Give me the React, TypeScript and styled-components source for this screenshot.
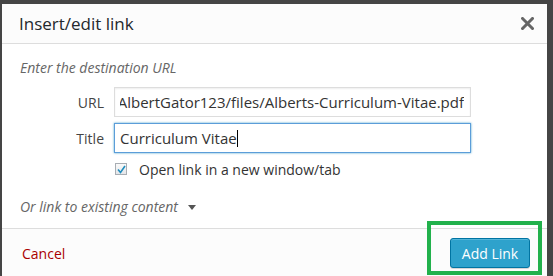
import React from "react";
import styled, { createGlobalStyle } from "styled-components";

const Global = createGlobalStyle`
  html, body { margin: 0; padding: 0; }
  body {
    background: #454545;
    font-family: "Open Sans", "Noto Sans", sans-serif;
    overflow: hidden;
  }
`;

const Backdrop = styled.div`
  padding: 4px 6px 0 2px;
  height: 272px;
  overflow: hidden;
`;

const Dialog = styled.div`
  background: #fff;
  display: flex;
  flex-direction: column;
`;

const Header = styled.div`
  height: 39px;
  background: #fcfcfc;
  border-bottom: 1px solid #dddddd;
  display: flex;
  align-items: center;
  justify-content: space-between;
  padding: 0 12px 0 17px;
`;

const Title = styled.h1`
  margin: 0;
  font-size: 17px;
  font-weight: 400;
  color: #23282d;
  line-height: 39px;
`;

const Close = styled.button`
  border: 0;
  background: none;
  padding: 0;
  width: 16px;
  height: 16px;
  display: flex;
  align-items: center;
  justify-content: center;
  color: #666;
`;

const Body = styled.div`
  padding: 14px 18px 11px 18px;
  display: flex;
  flex-direction: column;
`;

const Hint = styled.p`
  margin: 0 0 9px;
  font-size: 14px;
  line-height: 20px;
  font-style: italic;
  color: #666;
`;

const Row = styled.div`
  display: flex;
  align-items: center;
  gap: 10px;
  margin-bottom: 6px;
`;

const Label = styled.span`
  width: 84px;
  text-align: right;
  font-size: 14px;
  color: #444;
`;

const Field = styled.div<{ $focus?: boolean }>`
  box-sizing: border-box;
  width: 357px;
  height: 30px;
  padding: 0 6px 0 5px;
  border: 1px solid ${(p) => (p.$focus ? "#5b9dd9" : "#dddddd")};
  box-shadow: ${(p) =>
    p.$focus ? "0 0 2px rgba(30,140,190,0.8)" : "inset 0 1px 2px rgba(0,0,0,0.07)"};
  display: flex;
  align-items: center;
  font-size: 15px;
  color: #333;
  background: #fff;
`;

const Clip = styled.div<{ $end?: boolean }>`
  flex: 1;
  overflow: hidden;
  display: flex;
  justify-content: ${(p) => (p.$end ? "flex-end" : "flex-start")};
  white-space: nowrap;
  align-items: center;
`;

const Caret = styled.span`
  display: inline-block;
  width: 1px;
  height: 17px;
  background: #000;
`;

const CheckRow = styled.label`
  display: flex;
  align-items: center;
  gap: 12px;
  margin: 1px 0 0 95px;
  font-size: 14px;
  line-height: 20px;
  color: #333;
`;

const Box = styled.span`
  box-sizing: border-box;
  width: 12px;
  height: 12px;
  border: 1px solid #a8adb3;
  background: linear-gradient(#fafafa, #e4e6e9);
  display: flex;
  align-items: center;
  justify-content: center;
  margin-top: -2px;
`;

const Toggle = styled.div`
  margin-top: 17px;
  display: flex;
  align-items: center;
  gap: 10px;
  font-size: 14px;
  line-height: 20px;
  font-style: italic;
  color: #666;
`;

const Triangle = styled.span`
  width: 0;
  height: 0;
  border-left: 4px solid transparent;
  border-right: 4px solid transparent;
  border-top: 5px solid #555;
  margin-top: 1px;
`;

const Footer = styled.div`
  background: #fcfcfc;
  border-top: 1px solid #dddddd;
  padding: 9px 17px 9px 20px;
  display: flex;
  align-items: center;
  justify-content: space-between;
`;

const Cancel = styled.a`
  font-size: 14px;
  color: #a00;
  text-decoration: none;
`;

const Highlighted = styled.div`
  position: relative;
  display: flex;
`;

const Marker = styled.span`
  position: absolute;
  top: -17px;
  left: -23px;
  right: -12px;
  bottom: -7px;
  border: 4px solid #22b14c;
  pointer-events: none;
`;

const Primary = styled.button`
  box-sizing: border-box;
  height: 30px;
  width: 80px;
  padding: 0;
  border: 1px solid #0074a2;
  border-radius: 3px;
  background: #2ea2cc;
  box-shadow: inset 0 1px 0 rgba(120,200,230,0.5), 0 1px 0 rgba(0,0,0,0.15);
  color: #fff;
  font-family: "Open Sans", sans-serif;
  font-size: 14px;
`;

export default function App() {
  return (
    <>
      <Global />
      <Backdrop>
        <Dialog>
          <Header>
            <Title>Insert/edit link</Title>
            <Close aria-label="Close">
              <svg width="13" height="13" viewBox="0 0 13 13">
                <path d="M1.5 1.5 L11.5 11.5 M11.5 1.5 L1.5 11.5" stroke="#666" strokeWidth="3" strokeLinecap="square" />
              </svg>
            </Close>
          </Header>
          <Body>
            <Hint>Enter the destination URL</Hint>
            <Row>
              <Label>URL</Label>
              <Field>
                <Clip $end>
                  <span>AlbertGator123/files/Alberts-Curriculum-Vitae.pdf</span>
                </Clip>
              </Field>
            </Row>
            <Row>
              <Label>Title</Label>
              <Field $focus>
                <Clip>
                  <span>Curriculum Vitae</span>
                  <Caret />
                </Clip>
              </Field>
            </Row>
            <CheckRow>
              <Box>
                <svg width="9" height="9" viewBox="0 0 9 9">
                  <path d="M1 4.5 L3.5 7.5 L8 1" stroke="#1e8cbe" strokeWidth="1.6" fill="none" />
                </svg>
              </Box>
              Open link in a new window/tab
            </CheckRow>
            <Toggle>
              Or link to existing content
              <Triangle />
            </Toggle>
          </Body>
          <Footer>
            <Cancel href="#">Cancel</Cancel>
            <Highlighted>
              <Primary>Add Link</Primary>
              <Marker />
            </Highlighted>
          </Footer>
        </Dialog>
      </Backdrop>
    </>
  );
}
